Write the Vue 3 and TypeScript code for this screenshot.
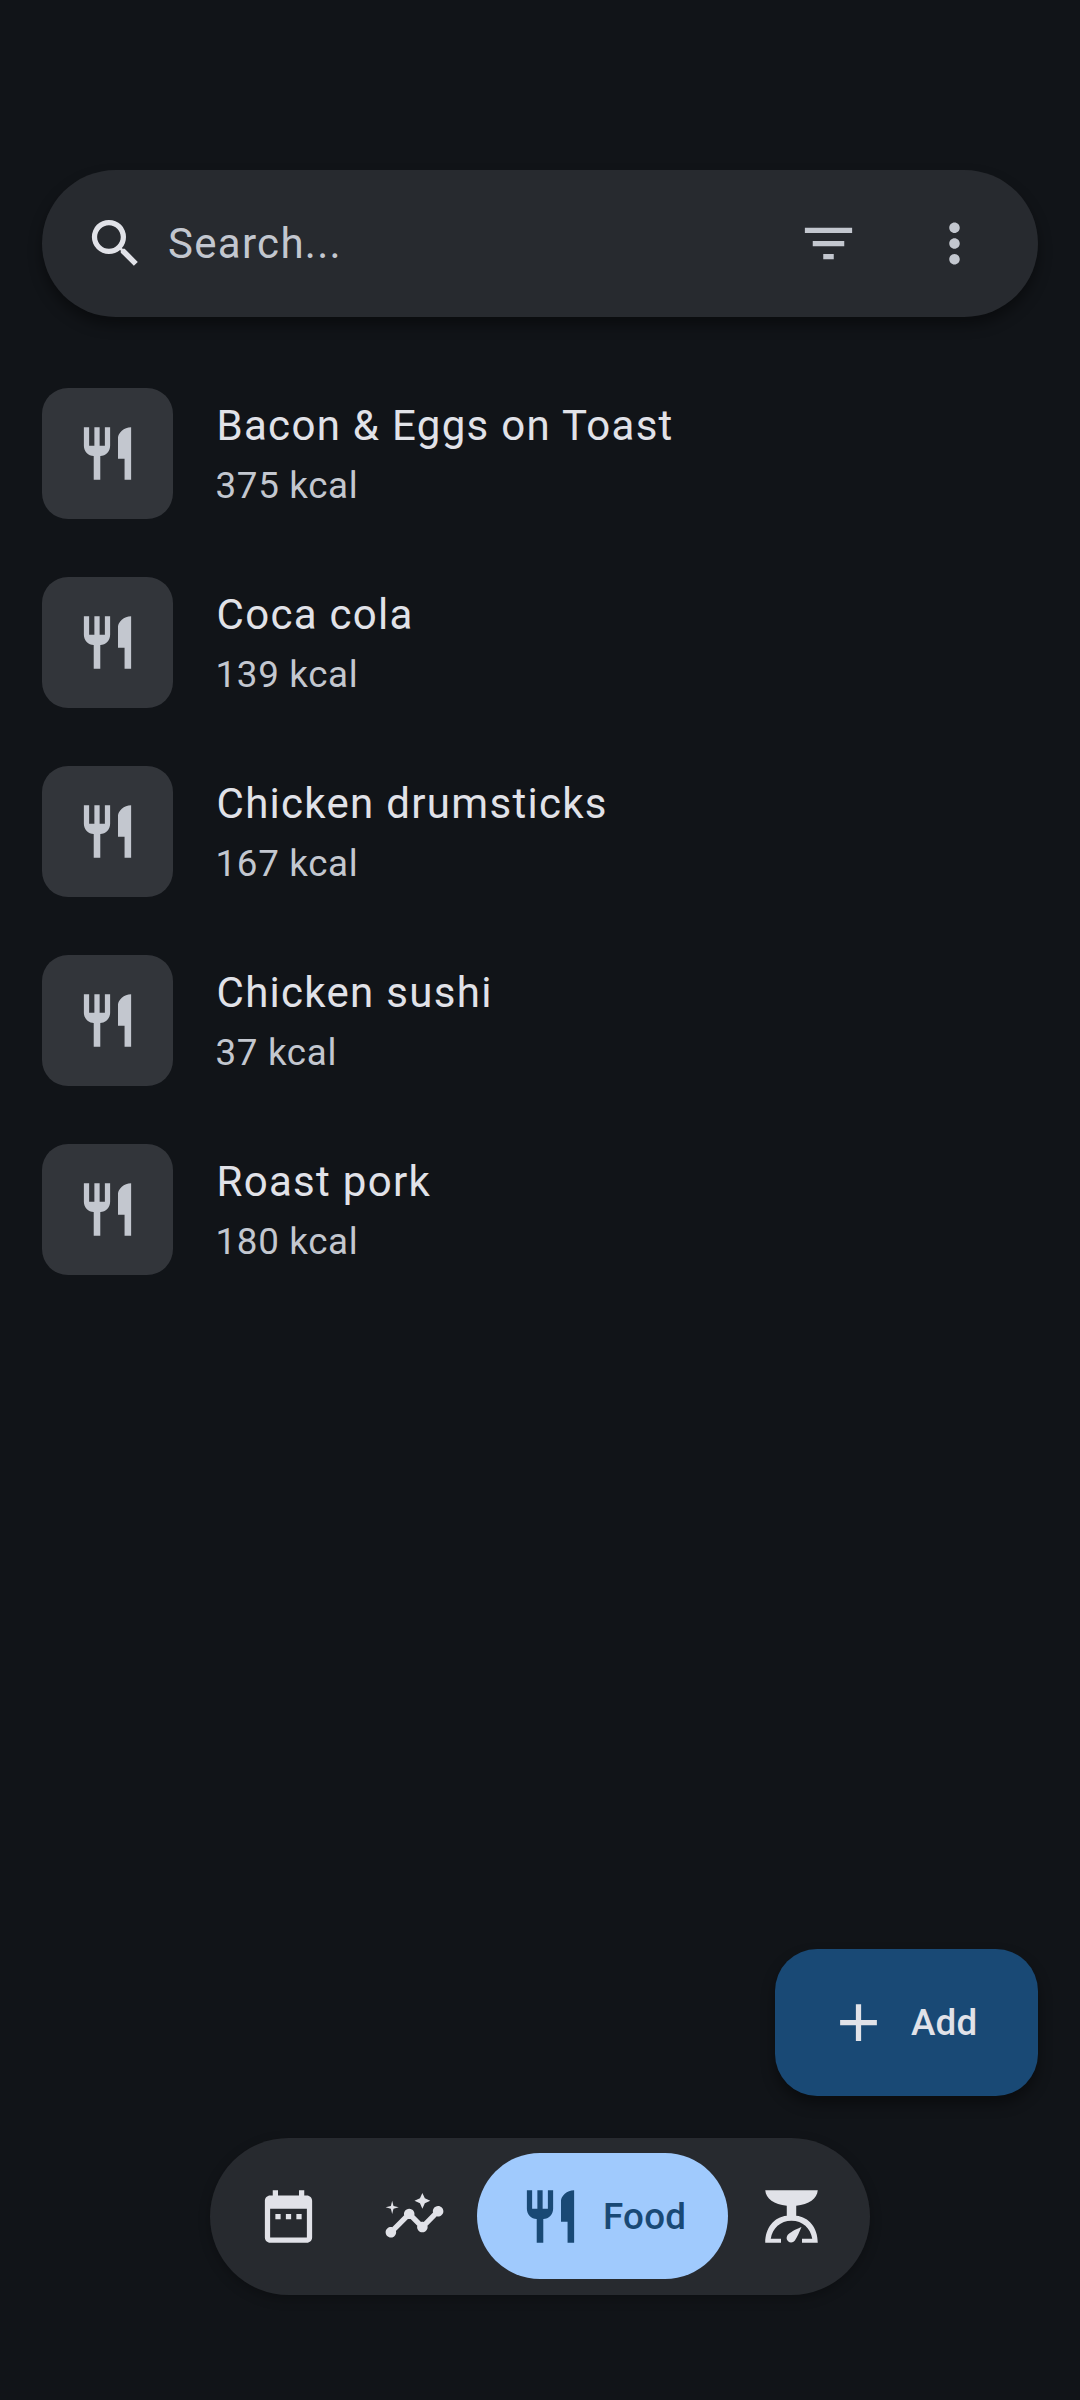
<script setup lang="ts">
const foods = [
  { name: 'Bacon & Eggs on Toast', kcal: 375 },
  { name: 'Coca cola', kcal: 139 },
  { name: 'Chicken drumsticks', kcal: 167 },
  { name: 'Chicken sushi', kcal: 37 },
  { name: 'Roast pork', kcal: 180 },
];

const restaurantPath =
  'M11 9H9V2H7v7H5V2H3v7c0 2.12 1.66 3.84 3.75 3.97V22h2.5v-9.03C11.34 12.84 13 11.12 13 9V2h-2v7zm5-3v8h2.5v8H21V2c-2.76 0-5 2.24-5 4z';
</script>

<template>
  <div class="page">
    <div class="search-bar">
      <svg class="icon search-icon" viewBox="0 0 24 24">
        <path d="M15.5 14h-.79l-.28-.27A6.47 6.47 0 0 0 16 9.5 6.5 6.5 0 1 0 9.5 16c1.61 0 3.09-.59 4.23-1.57l.27.28v.79l5 4.99L20.49 19l-4.99-5zm-6 0C7.01 14 5 11.99 5 9.5S7.01 5 9.5 5 14 7.01 14 9.5 11.99 14 9.5 14z" />
      </svg>
      <span class="search-text">Search...</span>
      <svg class="icon action" viewBox="0 0 24 24">
        <path d="M10 18h4v-2h-4v2zM3 6v2h18V6H3zm3 7h12v-2H6v2z" />
      </svg>
      <svg class="icon action" viewBox="0 0 24 24">
        <path d="M12 8c1.1 0 2-.9 2-2s-.9-2-2-2-2 .9-2 2 .9 2 2 2zm0 2c-1.1 0-2 .9-2 2s.9 2 2 2 2-.9 2-2-.9-2-2-2zm0 6c-1.1 0-2 .9-2 2s.9 2 2 2 2-.9 2-2-.9-2-2-2z" />
      </svg>
    </div>

    <ul class="food-list">
      <li v-for="food in foods" :key="food.name" class="food-row">
        <div class="food-thumb">
          <svg class="icon" viewBox="0 0 24 24"><path :d="restaurantPath" /></svg>
        </div>
        <div class="food-text">
          <div class="food-name">{{ food.name }}</div>
          <div class="food-kcal">{{ food.kcal }} kcal</div>
        </div>
      </li>
    </ul>

    <button type="button" class="fab">
      <svg class="icon" viewBox="0 0 24 24"><path d="M19 13h-6v6h-2v-6H5v-2h6V5h2v6h6v2z" /></svg>
      <span>Add</span>
    </button>

    <nav class="bottom-nav">
      <button type="button" class="nav-item">
        <svg class="icon" viewBox="0 0 24 24">
          <path fill-rule="evenodd" d="M19 4h-1V2h-2v2H8V2H6v2H5C3.9 4 3 4.9 3 6v14c0 1.1.9 2 2 2h14c1.1 0 2-.9 2-2V6c0-1.1-.9-2-2-2zm0 16H5V9h14v11z" />
          <path d="M7 11h2v2H7zm4 0h2v2h-2zm4 0h2v2h-2z" />
        </svg>
      </button>
      <button type="button" class="nav-item">
        <svg class="icon" viewBox="0 0 24 24">
          <path d="M21 8c-1.45 0-2.26 1.44-1.93 2.51l-3.55 3.56c-.3-.09-.74-.09-1.04 0l-2.55-2.55C12.27 10.45 11.46 9 10 9c-1.45 0-2.27 1.44-1.93 2.52l-4.56 4.55C2.44 15.74 1 16.55 1 18c0 1.1.9 2 2 2 1.45 0 2.26-1.44 1.93-2.51l4.55-4.56c.3.09.74.09 1.04 0l2.55 2.55C12.73 16.55 13.54 18 15 18c1.45 0 2.27-1.44 1.93-2.52l3.56-3.55c1.07.33 2.51-.48 2.51-1.93 0-1.1-.9-2-2-2z" />
          <path d="M15 9l.94-2.07L18 6l-2.06-.93L15 3l-.92 2.07L12 6l2.08.93z" />
          <path d="M3.5 11L4 9l2-.5L4 8l-.5-2L3 8l-2 .5L3 9z" />
        </svg>
      </button>
      <button type="button" class="nav-item is-active">
        <svg class="icon" viewBox="0 0 24 24"><path :d="restaurantPath" /></svg>
        <span>Food</span>
      </button>
      <button type="button" class="nav-item">
        <svg class="icon" viewBox="0 0 24 24">
          <path d="M2 2h20c-.2 3.200-3.400 5.500-8.200 5.900v3.800c4.900.5 8.200 4.600 8.200 10.300h-6v-1.500h3.900c-.6-4-3.700-6.900-7.900-6.900s-7.300 2.900-7.900 6.900H8V22H2c0-5.700 3.300-9.800 8.200-10.300V7.900C5.400 7.500 2.200 5.200 2 2z" />
          <path d="M15.800 16c-1.100.4-3.700 1.600-4.900 2.700-.9.800-1 2-.2 2.700.8.700 1.900.6 2.600-.3.900-1.200 1.900-3.700 2.500-5.100z" />
        </svg>
      </button>
    </nav>
  </div>
</template>

<style scoped>
.page {
  position: relative;
  box-sizing: border-box;
  height: 2400px;
  padding: 170px 42px 0;
  background: #111418;
  font-family: Roboto, sans-serif;
  overflow: hidden;
}
.icon {
  display: block;
  width: 63px;
  height: 63px;
  flex-shrink: 0;
  fill: currentColor;
}
.search-bar {
  display: flex;
  align-items: center;
  height: 147px;
  padding: 0 52.5px 0 42px;
  border-radius: 74px;
  background: #272a2f;
  box-shadow: 0 8px 14px rgba(0, 0, 0, 0.4);
  color: #c3c7cf;
}
.search-icon {
  color: #e1e2e8;
}
.search-text {
  flex: 1;
  margin-left: 21px;
  font-size: 42px;
  letter-spacing: 1.3px;
}
.action + .action {
  margin-left: 63px;
}
.food-list {
  list-style: none;
  margin: 42px 0 0;
  padding: 0;
}
.food-row {
  display: flex;
  align-items: center;
  height: 189px;
}
.food-thumb {
  display: flex;
  align-items: center;
  justify-content: center;
  width: 131px;
  height: 131px;
  border-radius: 26px;
  background: #32353a;
  color: #c3c7cf;
}
.food-text {
  margin-left: 43.5px;
}
.food-name {
  font-size: 42px;
  line-height: 63px;
  letter-spacing: 1.3px;
  color: #e1e2e8;
}
.food-kcal {
  margin: 3px 0 0 -1px;
  font-size: 36.75px;
  line-height: 52.5px;
  letter-spacing: 0.66px;
  color: #c3c7cf;
}
button {
  border: 0;
  padding: 0;
  font-family: inherit;
}
.fab {
  position: absolute;
  top: 1949px;
  right: 42px;
  display: flex;
  align-items: center;
  height: 147px;
  padding: 0 60.5px 0 52px;
  gap: 21px;
  border-radius: 42px;
  background: #194975;
  box-shadow: 0 8px 14px rgba(0, 0, 0, 0.4);
  color: #e1e2e8;
  font-size: 36.75px;
  font-weight: 500;
  letter-spacing: 0.26px;
}
.bottom-nav {
  position: absolute;
  top: 2138px;
  left: 210px;
  display: flex;
  align-items: flex-start;
  box-sizing: border-box;
  width: 660px;
  height: 157px;
  padding: 15px 15px 0;
  border-radius: 79px;
  background: #272a2f;
  box-shadow: 0 4px 12px rgba(0, 0, 0, 0.25);
}
.nav-item {
  display: flex;
  align-items: center;
  justify-content: center;
  width: 126px;
  height: 126px;
  background: transparent;
  color: #e1e2e8;
}
.nav-item.is-active {
  width: auto;
  padding: 0 42px;
  gap: 21px;
  border-radius: 63px;
  background: #a0cafd;
  color: #194975;
  font-size: 36.75px;
  font-weight: 500;
  letter-spacing: 0.26px;
}
</style>
